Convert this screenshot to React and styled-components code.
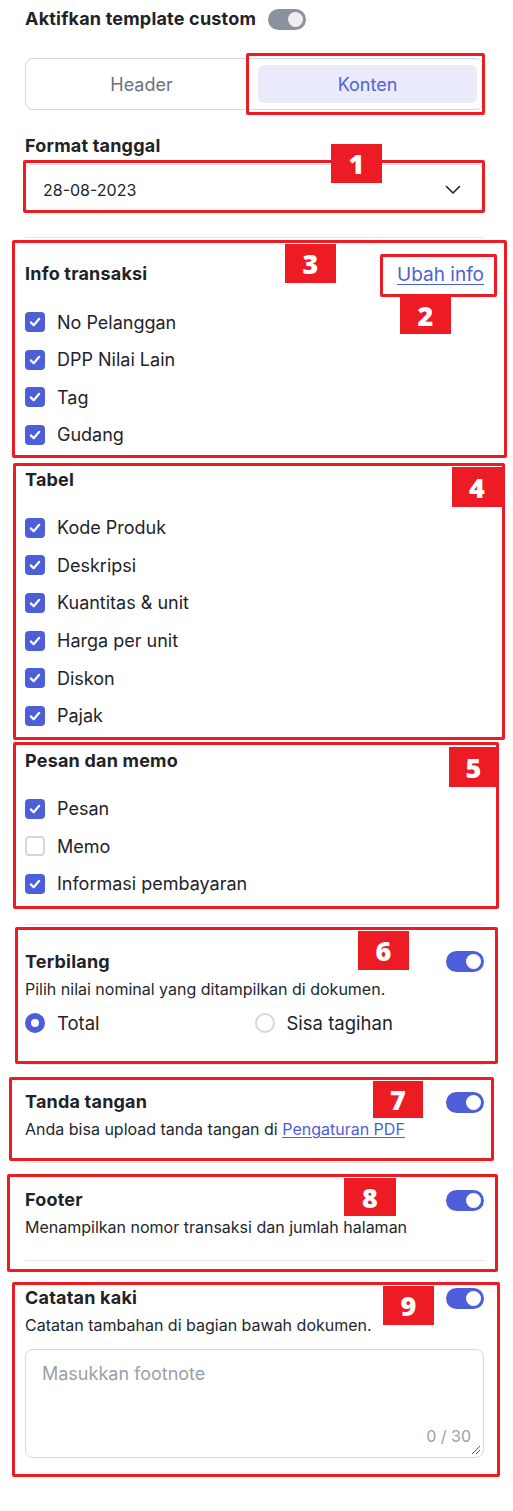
import { styled, createGlobalStyle } from "styled-components";

const GlobalStyle = createGlobalStyle`
  body {
    margin: 0;
    background: #ffffff;
    font-family: Inter, "Noto Sans", sans-serif;
    color: #1f2329;
  }
  * { box-sizing: border-box; }
`;

const blue = "#4c5fd9";
const red = "#ed1c24";

const infoItems = [
  { label: "No Pelanggan", on: true },
  { label: "DPP Nilai Lain", on: true },
  { label: "Tag", on: true },
  { label: "Gudang", on: true },
];
const tabelItems = [
  { label: "Kode Produk", on: true },
  { label: "Deskripsi", on: true },
  { label: "Kuantitas & unit", on: true },
  { label: "Harga per unit", on: true },
  { label: "Diskon", on: true },
  { label: "Pajak", on: true },
];
const pesanItems = [
  { label: "Pesan", on: true },
  { label: "Memo", on: false },
  { label: "Informasi pembayaran", on: true },
];

// anotasi merah di atas screenshot
const boxes = [
  { x: 246, y: 53, w: 239, h: 62 },
  { x: 23, y: 160, w: 462, h: 53 },
  { x: 12, y: 240, w: 495, h: 218 },
  { x: 380, y: 254, w: 117, h: 43 },
  { x: 13, y: 463, w: 492, h: 277 },
  { x: 13, y: 742, w: 486, h: 167 },
  { x: 15, y: 927, w: 483, h: 137 },
  { x: 9, y: 1077, w: 485, h: 84 },
  { x: 7, y: 1174, w: 491, h: 98 },
  { x: 12, y: 1282, w: 488, h: 195 },
];
const badges = [
  { n: 1, x: 331, y: 144, w: 51, h: 39 },
  { n: 3, x: 285, y: 244, w: 51, h: 39 },
  { n: 2, x: 400, y: 296, w: 51, h: 38 },
  { n: 4, x: 452, y: 467, w: 50, h: 40 },
  { n: 5, x: 449, y: 747, w: 49, h: 40 },
  { n: 6, x: 358, y: 931, w: 51, h: 39 },
  { n: 7, x: 373, y: 1081, w: 50, h: 37 },
  { n: 8, x: 344, y: 1178, w: 52, h: 38 },
  { n: 9, x: 383, y: 1286, w: 51, h: 39 },
];

function Check({ on, label }) {
  return (
    <CheckRow>
      <CheckBox $on={on}>
        {on && (
          <svg width="14" height="14" viewBox="0 0 14 14">
            <path d="M2.8 7.4 L5.7 10.2 L11.2 3.8" fill="none" stroke="#fff" strokeWidth="2.2" strokeLinecap="round" strokeLinejoin="round" />
          </svg>
        )}
      </CheckBox>
      <span>{label}</span>
    </CheckRow>
  );
}

function CheckGroup({ title, items, action }) {
  return (
    <Group>
      <GroupHead>
        <Title>{title}</Title>
        {action}
      </GroupHead>
      <CheckList>
        {items.map((it) => (
          <Check key={it.label} {...it} />
        ))}
      </CheckList>
    </Group>
  );
}

export default function App() {
  return (
    <>
      <GlobalStyle />
      <Page>
        <TopRow>
          <Title>Aktifkan template custom</Title>
          <Toggle $on={false} />
        </TopRow>

        <Tabs>
          <Tab>Header</Tab>
          <Tab $active>Konten</Tab>
        </Tabs>

        <FieldLabel>Format tanggal</FieldLabel>
        <Select>
          <span>28-08-2023</span>
          <svg width="16" height="10" viewBox="0 0 16 10">
            <path d="M1.5 1.5 L8 8 L14.5 1.5" fill="none" stroke="#1f2329" strokeWidth="1.6" strokeLinecap="round" strokeLinejoin="round" />
          </svg>
        </Select>

        <ContentSection>
          <CheckGroup title="Info transaksi" items={infoItems} action={<LinkText>Ubah info</LinkText>} />
          <CheckGroup title="Tabel" items={tabelItems} />
          <CheckGroup title="Pesan dan memo" items={pesanItems} />
        </ContentSection>

        <Section $bottom={29}>
          <SectionHead>
            <Title>Terbilang</Title>
            <Toggle $on />
          </SectionHead>
          <Desc>Pilih nilai nominal yang ditampilkan di dokumen.</Desc>
          <RadioGroup>
            <RadioRow>
              <Radio $on />
              <span>Total</span>
            </RadioRow>
            <RadioRow>
              <Radio />
              <span>Sisa tagihan</span>
            </RadioRow>
          </RadioGroup>
        </Section>

        <Section>
          <SectionHead>
            <Title>Tanda tangan</Title>
            <Toggle $on />
          </SectionHead>
          <Desc>
            Anda bisa upload tanda tangan di <InlineLink>Pengaturan PDF</InlineLink>
          </Desc>
        </Section>

        <Section>
          <SectionHead>
            <Title>Footer</Title>
            <Toggle $on />
          </SectionHead>
          <Desc>Menampilkan nomor transaksi dan jumlah halaman</Desc>
        </Section>

        <Section $last>
          <SectionHead>
            <Title>Catatan kaki</Title>
            <Toggle $on />
          </SectionHead>
          <Desc>Catatan tambahan di bagian bawah dokumen.</Desc>
          <TextArea>
            <Placeholder>Masukkan footnote</Placeholder>
            <Counter>0 / 30</Counter>
            <Grip width="12" height="12" viewBox="0 0 12 12">
              <path d="M11 3 L3 11 M11 7 L7 11" stroke="#555" strokeWidth="1" />
            </Grip>
          </TextArea>
        </Section>

        <Overlay>
          {boxes.map((b, i) => (
            <MarkBox key={i} $x={b.x} $y={b.y} $w={b.w} $h={b.h} />
          ))}
          {badges.map((b) => (
            <Badge key={b.n} $x={b.x} $y={b.y} $w={b.w} $h={b.h}>
              {b.n}
            </Badge>
          ))}
        </Overlay>
      </Page>
    </>
  );
}

const Page = styled.div`
  position: relative;
  width: 513px;
  min-height: 1511px;
  padding: 7px 29px 40px 25px;
`;

const TopRow = styled.div`
  display: flex;
  align-items: center;
  gap: 12px;
  height: 24px;
`;

const Title = styled.div`
  font-size: 18px;
  font-weight: 700;
  line-height: 24px;
  letter-spacing: 0.2px;
`;

const Toggle = styled.div`
  position: relative;
  flex: none;
  width: 38px;
  height: 21px;
  border-radius: 11px;
  background: ${(p) => (p.$on ? blue : "#8b919e")};

  &::after {
    content: "";
    position: absolute;
    top: 3px;
    right: 3px;
    width: 15px;
    height: 15px;
    border-radius: 50%;
    background: ${(p) => (p.$on ? "#ffffff" : "#eceef1")};
  }
`;

const Tabs = styled.div`
  display: grid;
  grid-template-columns: 1fr 1fr;
  gap: 7px;
  margin-top: 27px;
  padding: 6px;
  border: 1px solid #d5d9df;
  border-radius: 8px;
`;

const Tab = styled.div`
  height: 38px;
  display: flex;
  align-items: center;
  justify-content: center;
  border-radius: 6px;
  font-size: 18px;
  background: ${(p) => (p.$active ? "#e9ebfb" : "transparent")};
  color: ${(p) => (p.$active ? "#5262d8" : "#6b7280")};
`;

const FieldLabel = styled(Title)`
  margin-top: 24px;
`;

const Select = styled.div`
  margin-top: 6px;
  height: 49px;
  display: flex;
  align-items: center;
  justify-content: space-between;
  padding: 2px 22px 0 17px;
  border: 1px solid #d5d9df;
  border-radius: 6px;
  font-size: 16px;
`;

const ContentSection = styled.div`
  display: flex;
  flex-direction: column;
  gap: 21px;
  margin-top: 24px;
  padding: 24px 0 28px;
  border-top: 1px solid #e3e6ea;
  border-bottom: 1px solid #e3e6ea;
`;

const Group = styled.div`
  display: flex;
  flex-direction: column;
`;

const GroupHead = styled.div`
  display: flex;
  align-items: center;
  justify-content: space-between;
  height: 24px;
`;

const LinkText = styled.span`
  font-size: 19px;
  color: ${blue};
  text-decoration: underline;
  text-underline-offset: 3px;
`;

const CheckList = styled.div`
  display: flex;
  flex-direction: column;
  gap: 13.6px;
  margin-top: 24px;
`;

const CheckRow = styled.div`
  display: flex;
  align-items: center;
  gap: 12px;
  height: 24px;
  font-size: 18px;
`;

const CheckBox = styled.div`
  width: 20px;
  height: 20px;
  flex: none;
  display: flex;
  align-items: center;
  justify-content: center;
  border-radius: 4px;
  background: ${(p) => (p.$on ? blue : "#ffffff")};
  border: ${(p) => (p.$on ? "none" : "2px solid #d3d7de")};
`;

const Section = styled.div`
  padding: 25px 0 ${(p) => p.$bottom || 23}px;
  border-bottom: ${(p) => (p.$last ? "none" : "1px solid #e3e6ea")};
`;

const SectionHead = styled.div`
  display: flex;
  align-items: center;
  justify-content: space-between;
  height: 24px;
`;

const Desc = styled.div`
  margin-top: 5px;
  font-size: 16px;
  line-height: 20px;
  color: #23272e;
`;

const InlineLink = styled.span`
  color: ${blue};
  text-decoration: underline;
  text-underline-offset: 2px;
`;

const RadioGroup = styled.div`
  display: grid;
  grid-template-columns: 1fr 1fr;
  margin-top: 12.5px;
`;

const RadioRow = styled.div`
  display: flex;
  align-items: center;
  gap: 12px;
  height: 24px;
  font-size: 18.5px;
`;

const Radio = styled.div`
  width: 20px;
  height: 20px;
  flex: none;
  border-radius: 50%;
  background: #ffffff;
  border: ${(p) => (p.$on ? `6px solid ${blue}` : "2px solid #d3d7de")};
`;

const TextArea = styled.div`
  position: relative;
  margin-top: 14px;
  height: 109px;
  padding: 12px 16px;
  border: 1px solid #d5d9df;
  border-radius: 8px;
`;

const Placeholder = styled.div`
  font-size: 18px;
  line-height: 24px;
  color: #9aa0a9;
`;

const Counter = styled.div`
  position: absolute;
  right: 12px;
  bottom: 11px;
  font-size: 16px;
  color: #9aa0a9;
`;

const Grip = styled.svg`
  position: absolute;
  right: 2px;
  bottom: 2px;
`;

const Overlay = styled.div`
  position: absolute;
  inset: 0;
  pointer-events: none;
`;

const MarkBox = styled.div`
  position: absolute;
  left: ${(p) => p.$x}px;
  top: ${(p) => p.$y}px;
  width: ${(p) => p.$w}px;
  height: ${(p) => p.$h}px;
  border: 3px solid ${red};
  border-radius: 2px;
`;

const Badge = styled.div`
  position: absolute;
  left: ${(p) => p.$x}px;
  top: ${(p) => p.$y}px;
  width: ${(p) => p.$w}px;
  height: ${(p) => p.$h}px;
  display: flex;
  align-items: center;
  justify-content: center;
  background: ${red};
  color: #ffffff;
  font-family: "Open Sans", "DejaVu Sans", sans-serif;
  font-weight: 800;
  font-size: 27px;
  line-height: 1;
`;
